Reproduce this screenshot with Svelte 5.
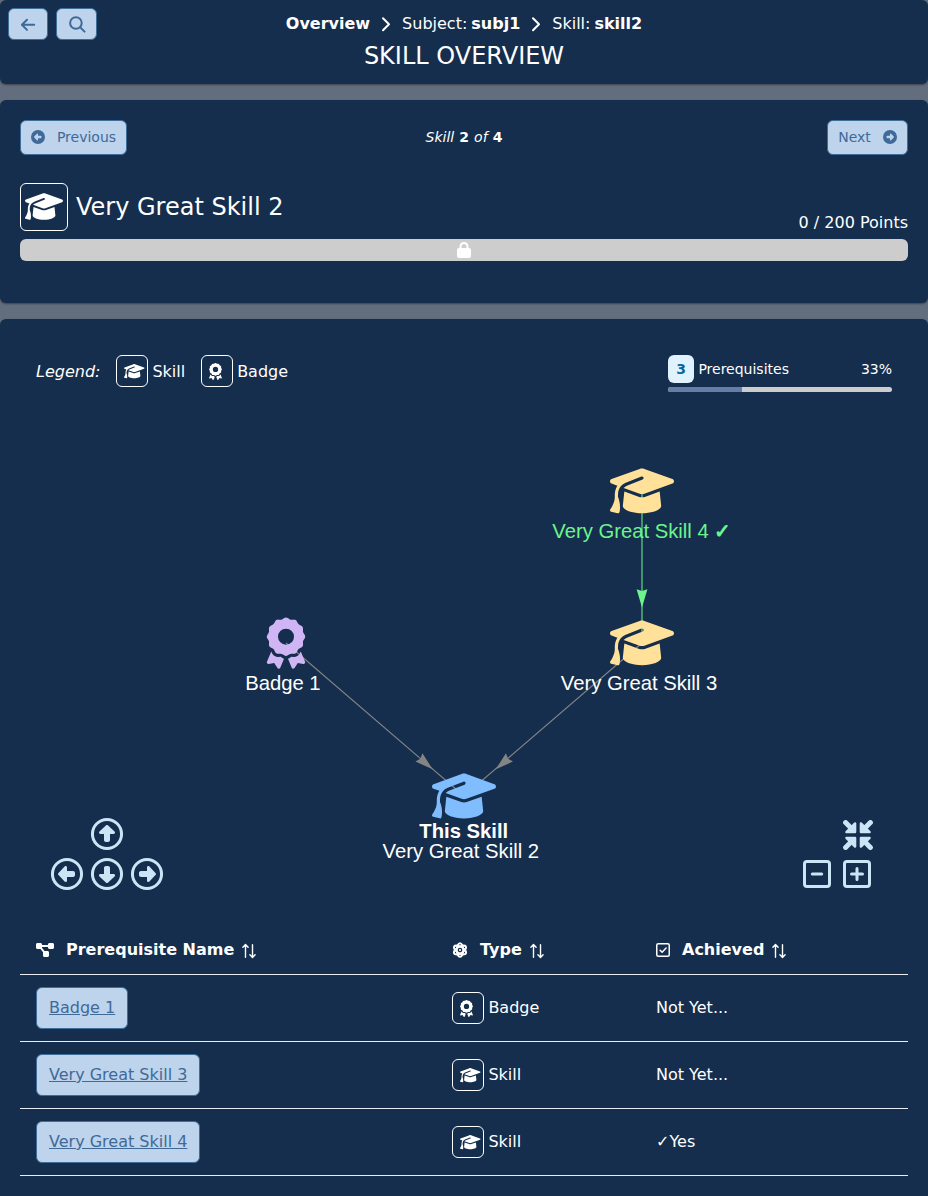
<script>
  const rows = [
    { name: 'Badge 1', type: 'Badge', achieved: 'Not Yet...' },
    { name: 'Very Great Skill 3', type: 'Skill', achieved: 'Not Yet...' },
    { name: 'Very Great Skill 4', type: 'Skill', achieved: '✓Yes' }
  ];
  const cap = 'M320 32c-8.1 0-16.1 1.4-23.7 4.1L15.8 137.4C6.3 140.9 0 149.9 0 160s6.3 19.1 15.8 22.6l57.9 20.9C57.3 229.3 48 259.8 48 291.9v28.1c0 28.4-10.8 57.7-22.3 80.8c-6.5 13-13.9 25.8-22.5 37.6C0 442.7-.9 448.3 .9 453.4s6 8.9 11.2 10.2l64 16c4.2 1.1 8.7 .3 12.4-2s6.3-6.1 7.1-10.4c8.6-42.8 4.3-81.2-2.1-108.7C90.3 344.3 86 329.8 80 316.5V291.9c0-30.2 10.2-58.7 27.9-81.5c12.9-15.5 29.6-28 49.2-35.7l157-61.7c8.2-3.2 17.5 .8 20.7 9s-.8 17.5-9 20.7l-157 61.7c-12.4 4.9-23.3 12.4-32.2 21.6l159.6 57.6c7.6 2.7 15.6 4.1 23.7 4.1s16.1-1.4 23.7-4.1L624.2 182.6c9.5-3.4 15.8-12.5 15.8-22.6s-6.3-19.1-15.8-22.6L343.7 36.1C336.1 33.4 328.1 32 320 32zM128 408c0 35.3 86 72 192 72s192-36.7 192-72L496.7 262.6 354.5 314c-11.1 4-22.8 6-34.5 6s-23.5-2-34.5-6L143.3 262.6 128 408z';
  const award = 'M173.8 5.5c11-7.3 25.4-7.3 36.4 0L228 17.2c6 3.9 13 5.8 20.1 5.4l21.3-1.3c13.2-.8 25.6 6.4 31.5 18.2l9.6 19.1c3.2 6.4 8.4 11.5 14.7 14.7L344.5 83c11.8 5.9 19 18.3 18.2 31.5l-1.3 21.3c-.4 7.1 1.5 14.2 5.4 20.1l11.8 17.8c7.3 11 7.3 25.4 0 36.4L366.8 228c-3.9 6-5.8 13-5.4 20.1l1.3 21.3c.8 13.2-6.4 25.6-18.2 31.5l-19.1 9.6c-6.4 3.2-11.5 8.4-14.7 14.7L301 344.5c-5.9 11.8-18.3 19-31.5 18.2l-21.3-1.3c-7.1-.4-14.2 1.5-20.1 5.4l-17.8 11.8c-11 7.3-25.4 7.3-36.4 0L156 366.8c-6-3.9-13-5.8-20.1-5.4l-21.3 1.3c-13.2 .8-25.6-6.4-31.5-18.2l-9.6-19.1c-3.2-6.4-8.4-11.5-14.7-14.7L39.5 301c-11.8-5.9-19-18.3-18.2-31.5l1.3-21.3c.4-7.1-1.5-14.2-5.4-20.1L5.5 210.2c-7.3-11-7.3-25.4 0-36.4L17.2 156c3.9-6 5.8-13 5.4-20.1l-1.3-21.3c-.8-13.2 6.4-25.6 18.2-31.5l19.1-9.6C65 70.2 70.2 65 73.4 58.6L83 39.5c5.9-11.8 18.3-19 31.5-18.2l21.3 1.3c7.1 .4 14.2-1.5 20.1-5.4L173.8 5.5zM272 192a80 80 0 1 0 -160 0 80 80 0 1 0 160 0zM1.3 441.8L44.4 339.3c.2 .1 .3 .2 .4 .4l9.6 19.1c11.7 23.2 36 37.3 62 35.8l21.3-1.3c.2 0 .5 0 .7 .2l17.8 11.8c5.1 3.3 10.5 5.9 16.1 7.7l-37.6 89.3c-2.3 5.5-7.4 9.2-13.3 9.7s-11.6-2.2-14.8-7.2L74.4 455.5l-56.1 8.3c-5.7 .8-11.4-1.5-15-6s-4.3-10.7-2.1-16zm248 60.4L211.7 413c5.6-1.8 11-4.3 16.1-7.7l17.8-11.8c.2-.1 .4-.2 .7-.2l21.3 1.3c26 1.5 50.3-12.6 62-35.8l9.6-19.1c.1-.2 .2-.3 .4-.4l43.2 102.5c2.2 5.3 1.4 11.4-2.1 16s-9.3 6.9-15 6l-56.1-8.3-32.2 49.2c-3.2 5-8.9 7.7-14.8 7.2s-11-4.3-13.3-9.7z';
  const disc = 'M512 256A256 256 0 1 0 0 256a256 256 0 1 0 512 0z';
  const fatArrow = 'M217.4 376.9L117.5 269.8c-3.5-3.8-5.5-8.7-5.5-13.8s2-10.1 5.5-13.8l99.9-107.1c4.2-4.5 10.1-7.1 16.3-7.1c12.3 0 22.3 10 22.3 22.3l0 57.7 96 0c17.7 0 32 14.3 32 32l0 32c0 17.7-14.3 32-32 32l-96 0 0 57.7c0 12.3-10 22.3-22.3 22.3c-6.2 0-12.1-2.6-16.3-7.1z';
  const project = 'M0 80C0 53.5 21.5 32 48 32h96c26.5 0 48 21.5 48 48V96H384V80c0-26.5 21.5-48 48-48h96c26.5 0 48 21.5 48 48v96c0 26.5-21.5 48-48 48H432c-26.5 0-48-21.5-48-48V160H192v16c0 1.7-.1 3.4-.3 5L272 288h96c26.5 0 48 21.5 48 48v96c0 26.5-21.5 48-48 48H272c-26.5 0-48-21.5-48-48V336c0-1.7 .1-3.4 .3-5L144 224H48c-26.5 0-48-21.5-48-48V80z';
  const lock = 'M144 144v48H304V144c0-44.2-35.8-80-80-80s-80 35.8-80 80zM80 192V144C80 64.5 144.5 0 224 0s144 64.5 144 144v48h16c35.3 0 64 28.7 64 64V448c0 35.3-28.7 64-64 64H64c-35.3 0-64-28.7-64-64V256c0-35.3 28.7-64 64-64H80z';
</script>

{#snippet typeBox(type)}
  <span class="box">
    {#if type === 'Badge'}
      <svg width="13" height="17" viewBox="0 0 384 512"><path d={award} /></svg>
    {:else}
      <svg width="20.5" height="16.4" viewBox="0 0 640 512"><path d={cap} /></svg>
    {/if}
  </span>
{/snippet}

{#snippet chevron()}
  <svg class="chev" width="10" height="16" viewBox="0 0 10 16" fill="none" stroke="#fff" stroke-width="2" stroke-linecap="round" stroke-linejoin="round"><path d="M2 2.2 8 8.2 2 14.2" /></svg>
{/snippet}

{#snippet sort()}
  <svg class="sort" width="16" height="16" viewBox="0 0 16 16" fill="none" stroke="#fff" stroke-width="1.4" stroke-linecap="round" stroke-linejoin="round"><path d="M4.5 14.2V1.6M1.9 4.2l2.6-2.7 2.6 2.7M11.5 1.8v12.6M8.9 11.8l2.6 2.7 2.6-2.7" /></svg>
{/snippet}

{#snippet ringArrow(angle)}
  <svg width="34" height="34" viewBox="-15 -15 542 542" fill="#cce5f6">
    <circle cx="256" cy="256" r="232" fill="none" stroke="#cce5f6" stroke-width="48" />
    <g transform={`rotate(${angle} 256 256)`}><path d={fatArrow} /></g>
  </svg>
{/snippet}

<div class="page">
  <header class="panel top">
    <div class="tools">
      <button class="btn back" aria-label="Back">
        <svg width="16" height="16" viewBox="0 0 16 16" fill="none" stroke="currentColor" stroke-width="2" stroke-linecap="round" stroke-linejoin="round"><path d="M14.2 8.8H2M7 3.7 1.9 8.8 7 13.9" /></svg>
      </button>
      <button class="btn find" aria-label="Search">
        <svg width="18" height="18" viewBox="0 0 18 18" fill="none" stroke="currentColor" stroke-width="2" stroke-linecap="round"><circle cx="7.9" cy="8" r="5.8" /><path d="m12.3 12.4 4.2 4.2" /></svg>
      </button>
    </div>
    <div class="heading">
      <nav>
        <b>Overview</b>{@render chevron()}<span class="crumb">Subject:<b>subj1</b></span>{@render chevron()}<span class="crumb">Skill:<b>skill2</b></span>
      </nav>
      <h1>SKILL OVERVIEW</h1>
    </div>
  </header>

  <section class="panel progress">
    <div class="pager">
      <button class="btn small prev">
        <svg width="14" height="14" viewBox="0 0 512 512"><path fill-rule="evenodd" d={disc + fatArrow} /></svg>Previous
      </button>
      <div class="count"><i>Skill</i> <b>2</b> <i>of</i> <b>4</b></div>
      <button class="btn small next">
        Next<svg width="14" height="14" viewBox="0 0 512 512"><path fill-rule="evenodd" d={disc + fatArrow} transform="rotate(180 256 256)" /></svg>
      </button>
    </div>
    <div class="title">
      <span class="bigbox"><svg width="38" height="31" viewBox="0 0 640 512"><path d={cap} /></svg></span>
      <h2>Very Great Skill 2</h2>
      <span class="points">0 / 200 Points</span>
    </div>
    <div class="bar"><svg width="14" height="16" viewBox="0 0 448 512"><path d={lock} /></svg></div>
  </section>

  <section class="panel prereqs">
    <div class="info">
      <div class="legend">
        <i>Legend:</i>
        <span class="item">{@render typeBox('Skill')}<span>Skill</span></span>
        <span class="item">{@render typeBox('Badge')}<span>Badge</span></span>
      </div>
      <div class="summary">
        <div class="line"><span class="num">3</span><span>Prerequisites</span><span class="pct">33%</span></div>
        <div class="track"><div class="fill" style:width="33%"></div></div>
      </div>
    </div>

    <div class="graph">
      <svg width="888" height="513" viewBox="20 412 888 513" font-family="'Liberation Sans', Arial, sans-serif" font-size="20.25" fill="#fff">
        <path d="M642 491V643" stroke="#5abf7f" stroke-width="1.4" />
        <path d="M286 643 464 796M642 643 464 796" stroke="#848484" stroke-width="1.1" fill="none" />
        <path d="M642 607.5 636.6 589.3 642 591.1 647.4 589.3Z" fill="#6cf58c" />
        <g fill="#848484">
          <path d="M0 0-18-5.4-16.2 0-18 5.4Z" transform="translate(432.6 769.2) rotate(40.7)" />
          <path d="M0 0-18-5.4-16.2 0-18 5.4Z" transform="translate(495.8 769.2) rotate(139.3)" />
        </g>
        <path d={cap} fill="#ffe199" transform="translate(610 465.3) scale(.1)" />
        <path d={cap} fill="#ffe199" transform="translate(610 617.3) scale(.1)" />
        <path d={cap} fill="#80bdff" transform="translate(432 770.4) scale(.1)" />
        <path d={award} fill="#d0b5f5" transform="translate(266.8 617.5) scale(.1)" />
        <text x="552.3" y="538" fill="#6cf58c">Very Great Skill 4 <tspan font-weight="700">✓</tspan></text>
        <text x="560.8" y="690">Very Great Skill 3</text>
        <text x="245.2" y="690">Badge 1</text>
        <text x="463.8" y="838" text-anchor="middle" font-weight="700">This Skill</text>
        <text x="382.6" y="858">Very Great Skill 2</text>
      </svg>
      <div class="pan">
        <span class="up">{@render ringArrow(90)}</span>
        {@render ringArrow(0)}{@render ringArrow(-90)}{@render ringArrow(180)}
      </div>
      <div class="zoom">
        <svg class="fit" width="30" height="30" viewBox="0 0 30 30" fill="#cce5f6" stroke="#cce5f6" stroke-linejoin="round">
          {#each [0, 90, 180, 270] as a}
            <g transform={`rotate(${a} 15 15)`}>
              <path d="M12.1 3.4V12.1H3.4Z" stroke-width="2.4" /><path d="M2.6 2.6 9 9" stroke-width="5" stroke-linecap="round" />
            </g>
          {/each}
        </svg>
        <svg width="28" height="28" viewBox="0 0 28 28" fill="none" stroke="#cce5f6" stroke-width="3" stroke-linecap="round"><rect x="1.5" y="1.5" width="25" height="25" rx="2.5" /><path d="M9.3 14.1h9.4" /></svg>
        <svg width="28" height="28" viewBox="0 0 28 28" fill="none" stroke="#cce5f6" stroke-width="3" stroke-linecap="round"><rect x="1.5" y="1.5" width="25" height="25" rx="2.5" /><path d="M8.5 14.1h11M14 8.6v11" /></svg>
      </div>
    </div>

    <div class="table">
      <div class="row head">
        <div><svg class="ic" width="18" height="16" viewBox="0 0 576 512"><path d={project} /></svg><b>Prerequisite Name</b>{@render sort()}</div>
        <div>
          <svg class="ic" width="16" height="16" viewBox="0 0 16 16" fill="none" stroke="#fff" stroke-width="2">
            <ellipse cx="8" cy="8" rx="3.2" ry="6.8" /><ellipse cx="8" cy="8" rx="3.2" ry="6.8" transform="rotate(60 8 8)" /><ellipse cx="8" cy="8" rx="3.2" ry="6.8" transform="rotate(-60 8 8)" /><circle cx="8" cy="8" r="1.1" fill="#fff" stroke="none" />
          </svg><b>Type</b>{@render sort()}
        </div>
        <div>
          <svg class="ic" width="14" height="14" viewBox="0 0 14 14" fill="none" stroke="#fff" stroke-width="1.5" stroke-linecap="round" stroke-linejoin="round"><rect x=".75" y=".75" width="12.5" height="12.5" rx="1.5" /><path d="m4.1 7.2 2 2L10.1 5" /></svg><b>Achieved</b>{@render sort()}
        </div>
      </div>
      {#each rows as r}
        <div class="row">
          <div><a class="btn link" href="#top">{r.name}</a></div>
          <div class="kind">{@render typeBox(r.type)}{r.type}</div>
          <div>{r.achieved}</div>
        </div>
      {/each}
    </div>
  </section>
</div>

<style>
  :global(body) { background: #626d7d; overflow: hidden; }
  .page { display: flex; flex-direction: column; gap: 16px; height: 1196px; overflow: hidden; box-sizing: border-box; font: 16px/24px 'DejaVu Sans', sans-serif; color: #fff; }
  .page :global(svg) { flex: none; display: block; }
  .panel { box-sizing: border-box; background: #152e4d; border-radius: 6px; box-shadow: 0 1px 2px rgba(0, 0, 0, .4); flex: none; }
  .box svg, .bigbox svg, .bar svg { fill: #fff; }
  .btn { box-sizing: border-box; display: inline-flex; align-items: center; justify-content: center; padding: 0; background: #bed3ec; border: 1px solid #3f6d9a; border-radius: 6px; color: #3f6a98; font: 16px/24px 'DejaVu Sans', sans-serif; }
  .top { height: 84px; display: grid; grid-template-columns: 100px 1fr 100px; padding: 8px 8px 0; }
  .tools { display: flex; gap: 8px; }
  .back { width: 40px; height: 32px; }
  .find { width: 41px; height: 32px; padding-left: 1px; }
  .heading { display: flex; flex-direction: column; align-items: center; padding-top: 4px; }
  nav { display: flex; align-items: center; height: 24px; white-space: nowrap; }
  .crumb { display: flex; gap: 4px; }
  .chev { margin: 0 11px; }
  h1 { margin: 2px 0 0; font-size: 24px; line-height: 36px; font-weight: 400; white-space: nowrap; }
  .progress { height: 203px; padding: 20px 20px 0; }
  .pager { display: grid; grid-template-columns: 1fr auto 1fr; align-items: center; height: 35px; font-size: 14px; }
  .count { padding-bottom: 2px; word-spacing: .6px; }
  .small { height: 35px; padding-bottom: 1px; font-size: 14px; line-height: 20px; }
  .small svg { fill: currentColor; }
  .prev { width: 107px; gap: 12px; justify-self: start; }
  .next { width: 81px; gap: 12px; justify-self: end; }
  .title { display: flex; height: 48px; margin-top: 28px; }
  .bigbox { box-sizing: border-box; width: 48px; height: 48px; padding-bottom: 1px; border: 1px solid #fff; border-radius: 6px; display: flex; align-items: center; justify-content: center; }
  h2 { margin: 0 0 0 8px; font-size: 24px; line-height: 48px; font-weight: 400; }
  .points { margin-left: auto; align-self: flex-end; line-height: 16px; }
  .bar { height: 22px; margin-top: 8px; border-radius: 6px; background: #cdcdcd; display: flex; align-items: center; justify-content: center; }
  .prereqs { height: 890px; padding: 36px 20px 0; }
  .info { display: flex; justify-content: space-between; padding: 0 16px; height: 57px; align-items: flex-start; }
  .legend { display: flex; align-items: center; }
  .legend > i { width: 64px; margin-right: 16px; padding-top: 2px; }
  .item { display: flex; align-items: center; gap: 4.4px; margin-right: 15.6px; }
  .item > span:last-child { padding-top: 2px; }
  .box { box-sizing: border-box; flex: none; width: 32px; height: 32px; padding-left: 7px; border: 1px solid #fff; border-radius: 6px; display: inline-flex; align-items: center; }
  .summary { width: 224px; font-size: 14px; }
  .line { display: flex; height: 28px; line-height: 28px; }
  .num { width: 26px; margin-right: 4.4px; border-radius: 6px; background: #e0f2fe; color: #0369a1; text-align: center; font-weight: 700; }
  .pct { margin-left: auto; }
  .track { height: 5px; margin-top: 4px; border-radius: 3px; background: #cdcdcd; overflow: hidden; }
  .fill { height: 5px; background: #647ea8; }
  .graph { position: relative; height: 513px; }
  .pan { position: absolute; left: 30px; top: 405px; display: grid; grid-template-columns: repeat(3, 34px); gap: 6px; }
  .up { grid-column: 1 / 4; justify-self: center; }
  .zoom { position: absolute; left: 783px; top: 408px; display: grid; grid-template-columns: 28px 28px; column-gap: 12px; row-gap: 10px; }
  .fit { grid-column: 2; }
  .table { display: flex; flex-direction: column; }
  .row { box-sizing: border-box; display: grid; grid-template-columns: 416px 204px 268px; height: 67px; border-bottom: 1px solid #e9edf2; }
  .row > div { display: flex; align-items: center; padding-left: 16px; }
  .row.head { height: 50px; }
  .ic { fill: #fff; margin-right: 12px; }
  .ic[fill='none'] { fill: none; }
  .sort { margin: 2px 0 0 7px; }
  .row .kind { gap: 4.4px; }
  .link { height: 42px; padding: 0 12px; text-decoration: underline; }
</style>
